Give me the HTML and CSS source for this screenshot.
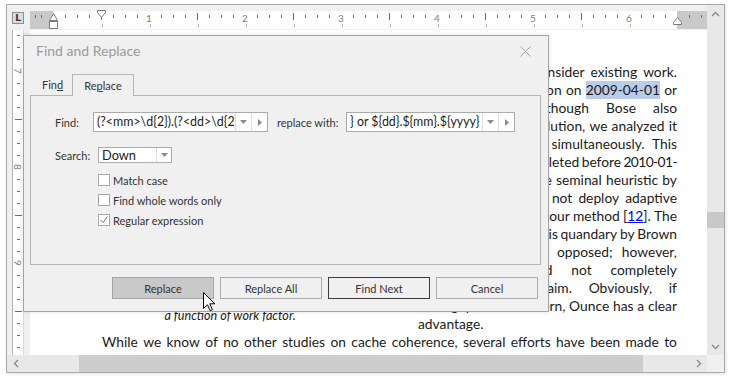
FILE: index.html
```html
<!DOCTYPE html>
<html>
<head>
<meta charset="utf-8">
<link rel="stylesheet" href="styles.css">
</head>
<body>
<div class="window">
  <div class="corner-tl"><div class="tabsel">L</div></div>

  <div class="hruler">
    <div class="hband">
      <div class="hm hm-l"></div>
      <div class="hscale">
        <div class="hs"><span class="mk"><span class="tk"></span></span></div>
        <div class="hs"><span class="mk mk-c"><span class="num">1</span></span></div>
        <div class="hs"><span class="mk"><span class="tk"></span></span></div>
        <div class="hs"><span class="mk mk-c"><span class="num">2</span></span></div>
        <div class="hs"><span class="mk"><span class="tk"></span></span></div>
        <div class="hs"><span class="mk mk-c"><span class="num">3</span></span></div>
        <div class="hs"><span class="mk"><span class="tk"></span></span></div>
        <div class="hs"><span class="mk mk-c"><span class="num">4</span></span></div>
        <div class="hs"><span class="mk"><span class="tk"></span></span></div>
        <div class="hs"><span class="mk mk-c"><span class="num">5</span></span></div>
        <div class="hs"><span class="mk"><span class="tk"></span></span></div>
        <div class="hs"><span class="mk mk-c"><span class="num">6</span></span></div>
        <div class="hs"></div>
      </div>
      <div class="hm hm-r"></div>
    </div>
    <svg class="ind ind-hang" width="10" height="18" viewBox="0 0 10 18"><path d="M0.5 8.5 L4.5 1.5 L8.5 8.5 Z" fill="#fff" stroke="#7a7a7a"/><rect x="0.5" y="9.5" width="8" height="7" fill="#fff" stroke="#7a7a7a"/></svg>
    <svg class="ind ind-first" width="10" height="8" viewBox="0 0 10 8"><path d="M0.5 0.5 L8.5 0.5 L8.5 2.5 L4.5 7.5 L0.5 2.5 Z" fill="#fff" stroke="#7a7a7a"/></svg>
    <svg class="ind ind-right" width="10" height="8" viewBox="0 0 10 8"><path d="M0.5 7.5 L0.5 5.5 L4.5 0.5 L8.5 5.5 L8.5 7.5 Z" fill="#fff" stroke="#7a7a7a"/></svg>
  </div>

  <div class="vscroll">
    <div class="sarr"><svg width="9" height="6" viewBox="0 0 9 6"><path d="M1 5 L4.5 1.5 L8 5" fill="none" stroke="#8a8a8a" stroke-width="1.4"/></svg></div>
    <div class="vtrack"><div class="vthumb"></div></div>
    <div class="sarr"><svg width="9" height="6" viewBox="0 0 9 6"><path d="M1 1 L4.5 4.5 L8 1" fill="none" stroke="#8a8a8a" stroke-width="1.4"/></svg></div>
  </div>

  <div class="vruler">
    <div class="vband">
      <div class="vs vs-first"><span class="vmk vmk-c"><span class="vnum">7</span></span></div>
      <div class="vs"><span class="vmk"><span class="vtk"></span></span></div>
      <div class="vs"><span class="vmk vmk-c"><span class="vnum">8</span></span></div>
      <div class="vs"><span class="vmk"><span class="vtk"></span></span></div>
      <div class="vs"><span class="vmk vmk-c"><span class="vnum">9</span></span></div>
      <div class="vs"><span class="vmk"><span class="vtk"></span></span></div>
      <div class="vs"></div>
    </div>
  </div>

  <div class="page">
    <div class="wrap">
      <div class="fig">
        <div class="cap">a function of work factor.</div>
      </div>
      <div class="col">
        <div class="ln"><span>used.</span><span>Second,</span><span>we</span><span>consider</span><span>existing</span><span>work.</span></div>
        <div class="ln"><span>was</span><span>released</span><span>by</span><span>Wilson</span><span>on</span><span class="hl">2009-04-01</span><span>or</span></div>
        <div class="ln"><span>implementation.</span><span>Although</span><span>Bose</span><span>also</span></div>
        <div class="ln"><span>proposed</span><span>a</span><span>similar</span><span>solution,</span><span>we</span><span>analyzed</span><span>it</span></div>
        <div class="ln"><span>locality</span><span>and</span><span>caching</span><span>simultaneously.</span><span>This</span></div>
        <div class="ln"><span>the</span><span>method</span><span>was</span><span>completed</span><span>before</span><span class="dg">2010-01-</span></div>
        <div class="ln"><span>approach</span><span>is</span><span>unlike</span><span>the</span><span>seminal</span><span>heuristic</span><span>by</span></div>
        <div class="ln"><span>Unlike</span><span>Smith,</span><span>we</span><span>do</span><span>not</span><span>deploy</span><span>adaptive</span></div>
        <div class="ln"><span>symmetries,</span><span>just</span><span>as</span><span>in</span><span>our</span><span>method</span><span>[<a class="ref">12</a>].</span><span>The</span></div>
        <div class="ln"><span>a</span><span>simple</span><span>solution</span><span>to</span><span>this</span><span>quandary</span><span>by</span><span>Brown</span></div>
        <div class="ln"><span>idea</span><span>is</span><span>diametrically</span><span>opposed;</span><span>however,</span></div>
        <div class="ln"><span>this</span><span>approach</span><span>did</span><span>not</span><span>completely</span></div>
        <div class="ln"><span>to</span><span>verify</span><span>this</span><span>claim.</span><span>Obviously,</span><span>if</span></div>
        <div class="ln"><span>throughput</span><span>is</span><span>a</span><span>concern,</span><span>Ounce</span><span>has</span><span>a</span><span>clear</span></div>
        <div class="ln ln-last"><span>advantage.</span></div>
      </div>
    </div>
    <div class="para"><span>While</span><span>we</span><span>know</span><span>of</span><span>no</span><span>other</span><span>studies</span><span>on</span><span>cache</span><span>coherence,</span><span>several</span><span>efforts</span><span>have</span><span>been</span><span>made</span><span>to</span></div>
  </div>

  <div class="hscroll">
    <div class="sarr h"><svg width="6" height="9" viewBox="0 0 6 9"><path d="M5 1 L1.5 4.5 L5 8" fill="none" stroke="#8a8a8a" stroke-width="1.4"/></svg></div>
    <div class="htrack"><div class="hthumb"></div></div>
    <div class="sarr h"><svg width="6" height="9" viewBox="0 0 6 9"><path d="M1 1 L4.5 4.5 L1 8" fill="none" stroke="#8a8a8a" stroke-width="1.4"/></svg></div>
  </div>
  <div class="corner-br"></div>
</div>

<div class="dialog">
  <div class="dlg-title">
    <span>Find and Replace</span>
    <svg width="11" height="11" viewBox="0 0 11 11"><path d="M0.5 0.5 L10.5 10.5 M10.5 0.5 L0.5 10.5" stroke="#a3a3a3" stroke-width="1"/></svg>
  </div>
  <div class="tabs">
    <div class="tab">Fin<u>d</u></div>
    <div class="tab active">Re<u>p</u>lace</div>
  </div>
  <div class="panel">
    <div class="frow">
      <span class="lbl-find">Find:</span>
      <div class="combo w1">
        <span class="val">(?&lt;mm&gt;\d{2}).(?&lt;dd&gt;\d{2}).(?&lt;yyyy&gt;\d{4})</span>
        <span class="cbtn"><svg width="7" height="4" viewBox="0 0 7 4"><path d="M0 0 H7 L3.5 4 Z" fill="#8a8a8a"/></svg></span>
        <span class="cbtn"><svg width="4" height="7" viewBox="0 0 4 7"><path d="M0 0 V7 L4 3.5 Z" fill="#8a8a8a"/></svg></span>
      </div>
      <span class="lbl-rep">replace with:</span>
      <div class="combo w2">
        <span class="val">} or ${dd}.${mm}.${yyyy}</span>
        <span class="cbtn"><svg width="7" height="4" viewBox="0 0 7 4"><path d="M0 0 H7 L3.5 4 Z" fill="#8a8a8a"/></svg></span>
        <span class="cbtn"><svg width="4" height="7" viewBox="0 0 4 7"><path d="M0 0 V7 L4 3.5 Z" fill="#8a8a8a"/></svg></span>
      </div>
    </div>
    <div class="srow">
      <span class="lbl-search">Search:</span>
      <div class="combo w3">
        <span class="val">Down</span>
        <span class="cbtn"><svg width="7" height="4" viewBox="0 0 7 4"><path d="M0 0 H7 L3.5 4 Z" fill="#8a8a8a"/></svg></span>
      </div>
    </div>
    <div class="checks">
      <div class="chk"><span class="box"></span><span>Match case</span></div>
      <div class="chk"><span class="box"></span><span>Find whole words only</span></div>
      <div class="chk"><span class="box"><svg width="10" height="10" viewBox="0 0 10 10"><path d="M1.5 5 L4 7.5 L8.5 1.5" fill="none" stroke="#6f6f6f" stroke-width="1"/></svg></span><span>Regular expression</span></div>
    </div>
  </div>
  <div class="btns">
    <div class="btn pressed">Replace</div>
    <div class="btn">Replace All</div>
    <div class="btn def">Find Next</div>
    <div class="btn">Cancel</div>
  </div>
</div>

<svg class="cursor" width="13" height="20" viewBox="0 0 13 20"><path d="M0.5 0.5 L0.5 16.5 L4.5 12.8 L7.2 18.8 L9.4 17.8 L6.8 11.8 L11.8 11.8 Z" fill="#fff" stroke="#000" stroke-width="1" stroke-linejoin="miter"/></svg>
</body>
</html>
```

FILE: styles.css
```css
* { box-sizing: border-box; margin: 0; padding: 0; }

body {
  width: 731px;
  height: 381px;
  background: #fff;
  font-family: Lato, "Open Sans", sans-serif;
  position: relative;
  overflow: hidden;
}

.window {
  margin: 4px 0 0 6px;
  width: 719px;
  height: 369px;
  border: 1px solid #a9a9a9;
  background: #f0f0f0;
  display: grid;
  grid-template-columns: 23px 677px 17px;
  grid-template-rows: 25px 325px 17px;
  box-shadow: 1px 1px 3px rgba(0, 0, 0, 0.12);
}

/* top-left tab selector */
.corner-tl { grid-area: 1 / 1 / 2 / 2; padding: 7px 0 0 5px; }
.tabsel {
  width: 12px;
  height: 12px;
  border: 1px solid #8e8e8e;
  background: #dcdcdc;
  font: bold 9px/10px "DejaVu Sans", sans-serif;
  color: #333;
  text-align: center;
}

/* horizontal ruler */
.hruler { grid-area: 1 / 2 / 2 / 3; position: relative; padding-top: 6px; }
.hband { display: flex; height: 18px; }
.hm {
  background-color: #c9c9c9;
  background-image: linear-gradient(#6e6e6e, #6e6e6e), linear-gradient(#6e6e6e, #6e6e6e);
  background-size: 1px 3px;
  background-repeat: no-repeat;
}
.hm-l { width: 23px; background-position: 5px 4px, 11px 4px; }
.hm-r { width: 30px; background-position: 12px 4px, 24px 4px; }
.hscale {
  width: 624px;
  display: flex;
  background: linear-gradient(to right, #ababab 1px, transparent 1px) 49px 13px / 48px 3px repeat-x #fff;
}
.hs {
  width: 48px;
  flex: none;
  display: flex;
  justify-content: flex-end;
  background-image: linear-gradient(#6e6e6e, #6e6e6e), linear-gradient(#6e6e6e, #6e6e6e), linear-gradient(#6e6e6e, #6e6e6e);
  background-size: 1px 3px;
  background-repeat: no-repeat;
  background-position: 12px 4px, 24px 4px, 36px 4px;
}
.mk { width: 0; display: flex; justify-content: flex-start; }
.mk-c { justify-content: center; }
.tk { flex: none; width: 1px; height: 7px; margin-top: 2px; background: #6e6e6e; }
.num { flex: none; font-size: 10px; line-height: 10px; margin-top: 2px; color: #7d7d7d; }

.ind { position: absolute; }
.ind-hang { left: 19px; top: 7px; }
.ind-first { left: 67px; top: 5px; }
.ind-right { left: 643px; top: 12px; }

/* scrollbars */
.vscroll { grid-area: 1 / 3 / 3 / 4; display: flex; flex-direction: column; background: #e8e8e8; }
.sarr { height: 17px; flex: none; display: flex; align-items: center; justify-content: center; }
.sarr.h { width: 17px; height: 17px; }
.vtrack { flex: 1; }
.vthumb { margin-top: 190px; height: 16px; background: #c8c8c8; }

.hscroll { grid-area: 3 / 1 / 4 / 3; display: flex; background: #e8e8e8; }
.htrack { flex: 1; }
.hthumb { margin-left: 55px; width: 564px; height: 17px; background: #cdcdcd; }
.corner-br { grid-area: 3 / 3 / 4 / 4; background: #f0f0f0; }

/* vertical ruler */
.vruler { grid-area: 2 / 1 / 3 / 2; padding-left: 5px; overflow: hidden; }
.vband {
  width: 12px;
  height: 100%;
  background: #fff;
  border-left: 1px solid #b4b4b4;
  border-right: 1px solid #dadada;
  display: flex;
  flex-direction: column;
}
.vs {
  height: 48px;
  flex: none;
  display: flex;
  flex-direction: column;
  justify-content: flex-end;
  background-image: linear-gradient(#6e6e6e, #6e6e6e), linear-gradient(#6e6e6e, #6e6e6e), linear-gradient(#6e6e6e, #6e6e6e);
  background-size: 3px 1px;
  background-repeat: no-repeat;
  background-position: 4px 12px, 4px 24px, 4px 36px;
}
.vs-first { height: 41px; background-position: 4px 5px, 4px 17px, 4px 29px; }
.vmk { height: 0; display: flex; align-items: flex-start; }
.vmk-c { align-items: center; }
.vtk { flex: none; width: 7px; height: 1px; margin-left: 2px; background: #6e6e6e; }
.vnum {
  flex: none;
  width: 10px;
  font-size: 10px;
  line-height: 10px;
  text-align: center;
  color: #7d7d7d;
  transform: rotate(90deg);
}

/* document page */
.page {
  grid-area: 2 / 2 / 3 / 3;
  background: #fff;
  overflow: hidden;
  padding: 33px 30px 0 23px;
  font-family: Lato, sans-serif;
  font-size: 13.8px;
  line-height: 18px;
  color: #1b1b1b;
}
.wrap { display: flex; gap: 11px; }
.fig { width: 354px; flex: none; display: flex; flex-direction: column; justify-content: flex-end; padding-bottom: 8px; }
.cap { font-style: italic; font-size: 12.6px; line-height: 18px; text-align: center; }
.col { width: 259px; flex: none; }
.ln { display: flex; justify-content: space-between; height: 18px; white-space: nowrap; }
.ln-last { justify-content: flex-start; }
.hl { background: #b9cce9; }
.dg { letter-spacing: -0.6px; }
.ref { color: #0000ee; text-decoration: underline; }
.para { display: flex; justify-content: space-between; margin-left: 49px; white-space: nowrap; height: 18px; }

/* dialog */
.dialog {
  position: absolute;
  left: 23px;
  top: 35px;
  width: 526px;
  height: 277px;
  background: #f0f0f0;
  border: 1px solid #a3a3a3;
  font-family: Lato, sans-serif;
  font-size: 11px;
  line-height: 1;
  color: #333;
  box-shadow: 0 0 5px rgba(0, 0, 0, 0.12);
}
.dlg-title {
  height: 30px;
  display: flex;
  align-items: center;
  justify-content: space-between;
  padding: 0 17px 0 12px;
  font-size: 14px;
  color: #9a9a9a;
}
.tabs { margin-top: 8px; display: flex; padding-left: 6px; height: 21px; position: relative; z-index: 1; }
.tab { width: 42px; padding-left: 12px; display: flex; align-items: center; }
.tab.active {
  width: 62px;
  padding: 0 0 1px 0;
  justify-content: center;
  height: 22px;
  border: 1px solid #b5b5b5;
  border-bottom: 0;
  background: #f0f0f0;
}
.panel {
  margin: 0 7px 0 6px;
  height: 170px;
  border: 1px solid #b5b5b5;
  padding: 16px 0 0 24px;
}
.frow { display: flex; align-items: center; height: 20px; }
.lbl-find { width: 38px; }
.lbl-rep { margin-left: 9px; width: 69px; }
.combo { display: flex; height: 20px; border: 1px solid #ababab; background: #fff; }
.combo.w1 { width: 175px; }
.combo.w2 { width: 169px; }
.val { flex: 1; overflow: hidden; white-space: nowrap; padding-left: 3px; font-size: 12.4px; line-height: 18px; color: #222; }
.cbtn { width: 16px; flex: none; border-left: 1px solid #dedede; display: flex; align-items: center; justify-content: center; }

.srow { display: flex; align-items: center; height: 16px; margin-top: 15px; }
.lbl-search { width: 43px; }
.combo.w3 { width: 74px; height: 16px; }
.combo.w3 .val { line-height: 14px; font-size: 12.8px; }
.combo.w3 .cbtn { width: 15px; }

.checks { margin: 7px 0 0 43px; }
.chk { height: 20px; display: flex; align-items: center; gap: 3px; }
.box {
  width: 12px;
  height: 12px;
  border: 1px solid #a8a8a8;
  background: #fff;
  display: flex;
  align-items: center;
  justify-content: center;
}

.btns { display: flex; justify-content: flex-end; gap: 6px; margin-top: 12px; padding-right: 10px; }
.btn {
  width: 102px;
  height: 22px;
  border: 1px solid #adadad;
  background: #f0f0f0;
  display: flex;
  align-items: center;
  justify-content: center;
}
.btn.pressed { background: #c9c9c9; border-color: #a5a5a5; }
.btn.def { border-color: #3c3c3c; }

.cursor { position: absolute; left: 203px; top: 292px; }
```
